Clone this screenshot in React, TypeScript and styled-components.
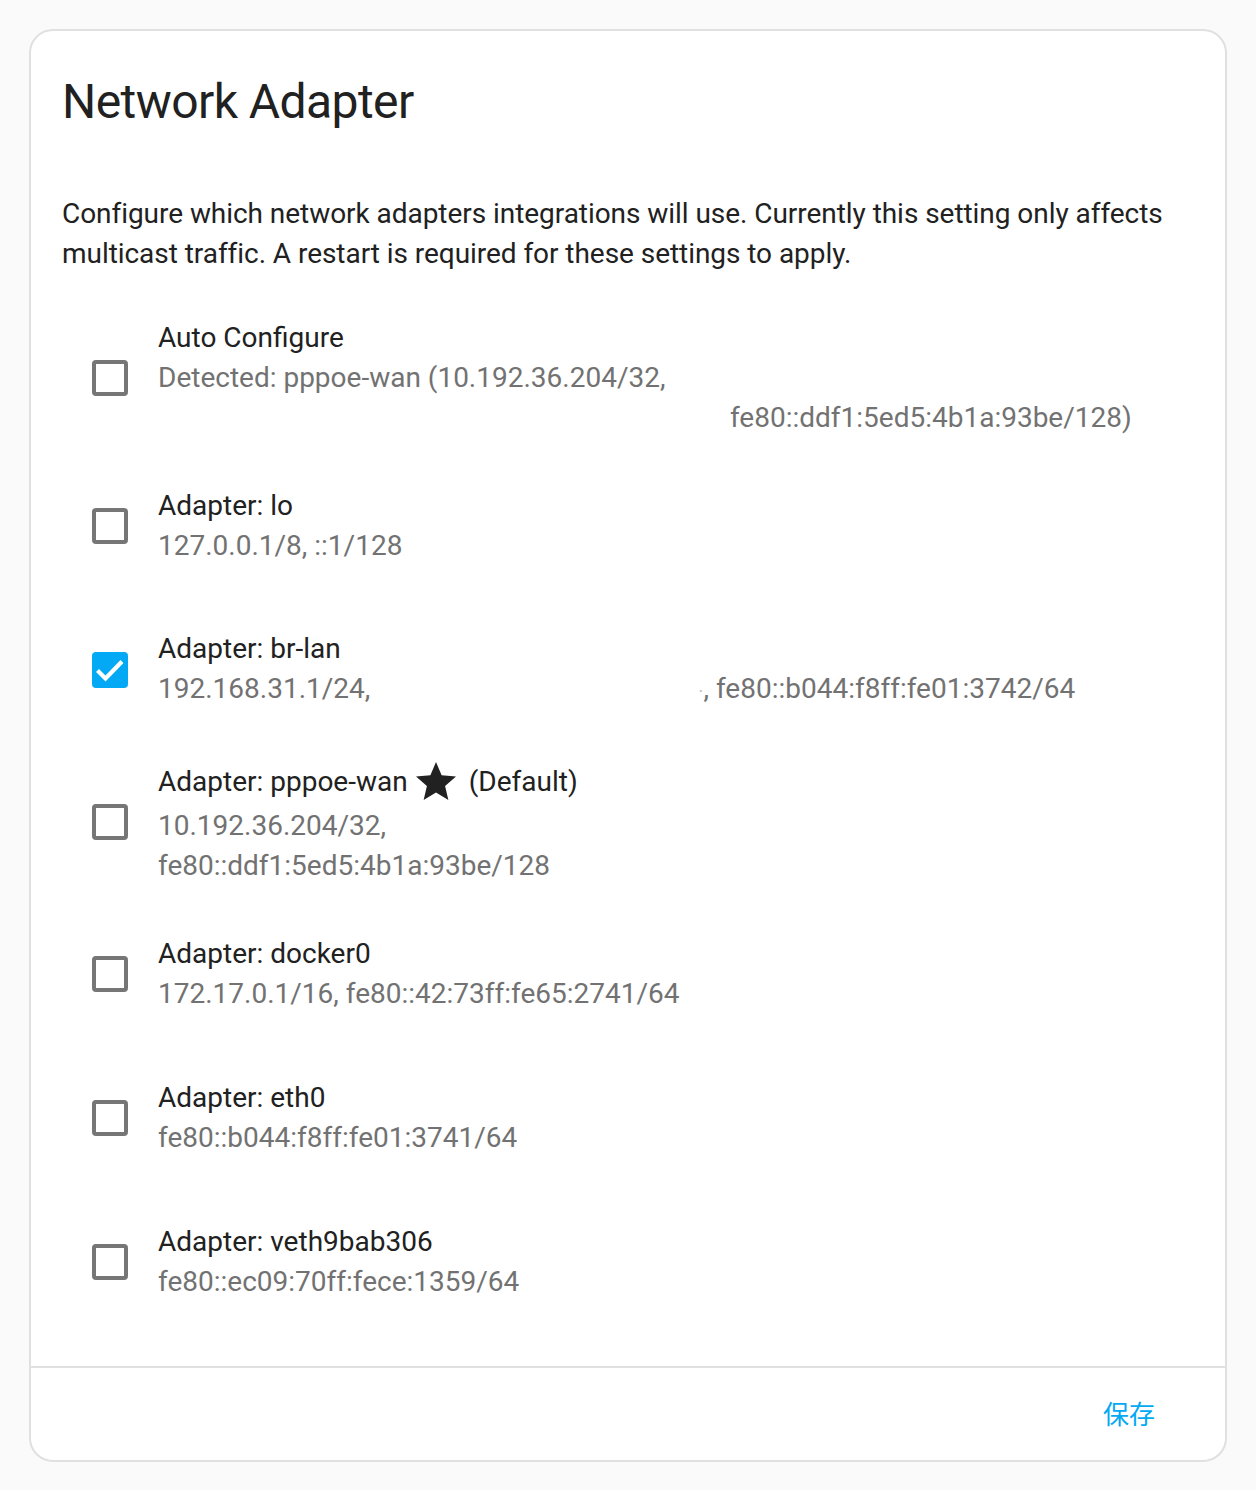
import React from "react";
import styled, { createGlobalStyle } from "styled-components";

const GlobalStyle = createGlobalStyle`
  html, body {
    margin: 0;
    padding: 0;
    background: #fafafa;
  }
  body {
    font-family: Roboto, "Noto Sans", "Noto Sans CJK SC", sans-serif;
    -webkit-font-smoothing: antialiased;
  }
`;

const Card = styled.div`
  box-sizing: border-box;
  width: 1198px;
  margin: 29px;
  background: #fff;
  border: 2px solid #e0e0e0;
  border-radius: 24px;
  color: #212121;
`;

const CardHeader = styled.h1`
  margin: 0;
  padding: 39px 32px 0 31px;
  font-size: 48px;
  line-height: 64px;
  font-weight: 400;
  letter-spacing: -0.012em;
`;

const Description = styled.p`
  margin: 60px 32px 0 31px;
  font-size: 28px;
  line-height: 40px;
  letter-spacing: -0.05px;
`;

const AdapterList = styled.div`
  display: flex;
  flex-direction: column;
  gap: 32px;
  margin-top: 44px;
  padding: 0 32px 48px 61px;
`;

const AdapterRow = styled.div`
  display: flex;
  align-items: center;
  min-height: 112px;
`;

const Checkbox = styled.span<{ $checked: boolean }>`
  box-sizing: border-box;
  flex: none;
  width: 36px;
  height: 36px;
  border-radius: 4px;
  border: ${(p) => (p.$checked ? "none" : "4px solid #767676")};
  background: ${(p) => (p.$checked ? "#03a9f4" : "transparent")};
  display: flex;
  svg {
    display: block;
  }
`;

const RowText = styled.div`
  margin-left: 30px;
  font-size: 28px;
  line-height: 40px;
`;

const Label = styled.div<{ $tall: boolean }>`
  display: flex;
  align-items: center;
  height: ${(p) => (p.$tall ? "48px" : "40px")};
  color: #212121;
  white-space: nowrap;
`;

const StarWrap = styled.span`
  display: inline-flex;
  margin: 0 9px 0 4px;
`;

const Secondary = styled.div`
  color: #727272;
`;

const Redacted = styled.span<{ $width: number }>`
  display: inline-block;
  width: ${(p) => p.$width}px;
  height: 1px;
`;

const Faint = styled.span`
  color: #c4c4c4;
  font-size: 20px;
`;

const CardActions = styled.div`
  display: flex;
  justify-content: flex-end;
  align-items: center;
  border-top: 2px solid #e0e0e0;
  padding: 8px 54px 12px 32px;
`;

const TextButton = styled.button`
  height: 72px;
  padding: 0 16px;
  border: none;
  background: none;
  color: #03a9f4;
  font-family: Roboto, "Noto Sans CJK SC", sans-serif;
  font-size: 26px;
  font-weight: 400;
  letter-spacing: 0;
  cursor: pointer;
`;

type Adapter = {
  label: string;
  isDefault?: boolean;
  checked?: boolean;
  lines: React.ReactNode[];
};

const adapters: Adapter[] = [
  {
    label: "Auto Configure",
    lines: [
      <>
        Detected: pppoe-wan (10.192.36.204/32, <Redacted $width={565} />{" "}
        fe80::ddf1:5ed5:4b1a:93be/128)
      </>,
    ],
  },
  { label: "Adapter: lo", lines: ["127.0.0.1/8, ::1/128"] },
  {
    label: "Adapter: br-lan",
    checked: true,
    lines: [
      <>
        192.168.31.1/24, <Redacted $width={321} />
        <Faint>·</Faint>, fe80::b044:f8ff:fe01:3742/64
      </>,
    ],
  },
  {
    label: "Adapter: pppoe-wan",
    isDefault: true,
    lines: ["10.192.36.204/32,", "fe80::ddf1:5ed5:4b1a:93be/128"],
  },
  {
    label: "Adapter: docker0",
    lines: ["172.17.0.1/16, fe80::42:73ff:fe65:2741/64"],
  },
  { label: "Adapter: eth0", lines: ["fe80::b044:f8ff:fe01:3741/64"] },
  { label: "Adapter: veth9bab306", lines: ["fe80::ec09:70ff:fece:1359/64"] },
];

const StarIcon = () => (
  <svg width="48" height="48" viewBox="0 0 24 24" fill="#212121">
    <path d="M12,17.27L18.18,21L16.54,13.97L22,9.24L14.81,8.62L12,2L9.19,8.62L2,9.24L7.45,13.97L5.82,21L12,17.27Z" />
  </svg>
);

const App: React.FC = () => {
  return (
    <>
      <GlobalStyle />
      <Card>
        <CardHeader>Network Adapter</CardHeader>
        <Description>
          Configure which network adapters integrations will use. Currently
          this setting only affects multicast traffic. A restart is required
          for these settings to apply.
        </Description>
        <AdapterList>
          {adapters.map((a) => (
            <AdapterRow key={a.label}>
              <Checkbox $checked={!!a.checked}>
                {a.checked && (
                  <svg width="36" height="36" viewBox="0 0 36 36">
                    <path
                      d="M5.5 18.5 L13.5 26.5 L30 9.5"
                      fill="none"
                      stroke="#fff"
                      strokeWidth="4.2"
                    />
                  </svg>
                )}
              </Checkbox>
              <RowText>
                <Label $tall={!!a.isDefault}>
                  {a.label}
                  {a.isDefault && (
                    <>
                      <StarWrap>
                        <StarIcon />
                      </StarWrap>
                      (Default)
                    </>
                  )}
                </Label>
                {a.lines.map((l, i) => (
                  <Secondary key={i}>{l}</Secondary>
                ))}
              </RowText>
            </AdapterRow>
          ))}
        </AdapterList>
        <CardActions>
          <TextButton type="button">保存</TextButton>
        </CardActions>
      </Card>
    </>
  );
};

export default App;
